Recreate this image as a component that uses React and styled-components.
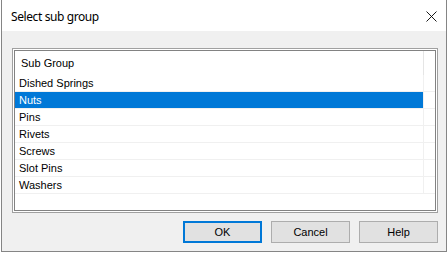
import React, { useState } from "react";
import styled, { createGlobalStyle } from "styled-components";

const GlobalStyle = createGlobalStyle`
  html, body {
    margin: 0;
    padding: 0;
    background: #ffffff;
  }
`;

const Window = styled.div`
  box-sizing: border-box;
  margin-left: 1px;
  width: 446px;
  height: 252px;
  display: flex;
  flex-direction: column;
  border: 1px solid #858585;
  border-top: 0;
  background: #f0f0f0;
`;

const TitleBar = styled.div`
  height: 31px;
  flex: none;
  display: flex;
  align-items: center;
  justify-content: space-between;
  padding: 0 9px 0 9px;
  background: #ffffff;
  font-family: "Noto Sans", "Open Sans", sans-serif;
  font-size: 12px;
  letter-spacing: -0.4px;
  color: #000;
`;

const Title = styled.span`
  padding-top: 1px;
`;

const CloseButton = styled.button`
  border: 0;
  background: transparent;
  padding: 0;
  width: 11px;
  height: 11px;
  display: flex;
  margin-top: 1px;
  cursor: pointer;
`;

const Body = styled.div`
  flex: 1;
  display: flex;
  flex-direction: column;
  padding: 17px 8px 8px 10px;
  gap: 8px;
`;

const ListFrame = styled.div`
  box-sizing: border-box;
  height: 165px;
  border: 1px solid #a0a0a0;
  padding: 1px;
  background: #ffffff;
`;

const ListInner = styled.div`
  box-sizing: border-box;
  height: 100%;
  border: 1px solid #828282;
  background: #ffffff;
  font-family: "Liberation Sans", Arial, sans-serif;
  font-size: 11px;
  color: #000;
  overflow: hidden;
`;

const HeaderRow = styled.div`
  display: grid;
  grid-template-columns: 409px 1fr;
  height: 24px;
`;

const HeaderCell = styled.div`
  display: flex;
  align-items: center;
  padding-left: 6px;
  border-right: 1px solid #e5e5e5;
`;

const Row = styled.div`
  display: grid;
  grid-template-columns: 409px 1fr;
  height: 17px;
  box-sizing: border-box;
  border-bottom: 1px solid #f0f0f0;
`;

const Cell = styled.div`
  display: flex;
  align-items: center;
  padding-left: 4px;
  border-right: 1px solid #f0f0f0;
  background: ${(p) => (p.$selected ? "#0078d7" : "transparent")};
  color: ${(p) => (p.$selected ? "#ffffff" : "#000000")};
`;

const ButtonRow = styled.div`
  display: flex;
  justify-content: flex-end;
  gap: 9px;
`;

const Button = styled.button`
  box-sizing: border-box;
  width: 79px;
  height: 22px;
  padding: 0;
  background: #e1e1e1;
  border: ${(p) => (p.$default ? "2px solid #0078d7" : "1px solid #adadad")};
  font-family: "Liberation Sans", Arial, sans-serif;
  font-size: 11px;
  color: #000;
  outline: none;
`;

const groups = [
  "Dished Springs",
  "Nuts",
  "Pins",
  "Rivets",
  "Screws",
  "Slot Pins",
  "Washers",
];

export default function App() {
  const [selected, setSelected] = useState("Nuts");

  return (
    <>
      <GlobalStyle />
      <Window>
        <TitleBar>
          <Title>Select sub group</Title>
          <CloseButton aria-label="Close">
            <svg width="11" height="11" viewBox="0 0 11 11">
              <path d="M0.5 0.5 L10.5 10.5 M10.5 0.5 L0.5 10.5" stroke="#000" strokeWidth="0.9" fill="none" />
            </svg>
          </CloseButton>
        </TitleBar>
        <Body>
          <ListFrame>
            <ListInner>
              <HeaderRow>
                <HeaderCell>Sub Group</HeaderCell>
                <div />
              </HeaderRow>
              {groups.map((g) => (
                <Row key={g} onClick={() => setSelected(g)}>
                  <Cell $selected={g === selected}>{g}</Cell>
                  <div />
                </Row>
              ))}
            </ListInner>
          </ListFrame>
          <ButtonRow>
            <Button $default>OK</Button>
            <Button>Cancel</Button>
            <Button>Help</Button>
          </ButtonRow>
        </Body>
      </Window>
    </>
  );
}
